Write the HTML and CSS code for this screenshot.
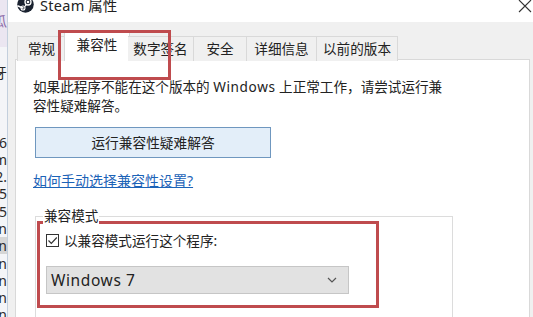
FILE: index.html
```html
<!DOCTYPE html>
<html lang="zh-CN">
<head>
<meta charset="utf-8">
<title>Steam 属性</title>
<link rel="stylesheet" href="styles.css">
</head>
<body>
<div class="bgwin">
  <div class="bgrow purple"></div>
  <div class="bgrow purple"><span class="pc">瓜</span></div>
  <div class="bgrow purple"></div>
  <div class="bgrow"></div>
  <div class="bgrow"><span>牙</span></div>
  <div class="bgrow"></div>
  <div class="bgrow"></div>
  <div class="bgrow"></div>
  <div class="bgrow"><span>26</span></div>
  <div class="bgrow"><span>am</span></div>
  <div class="bgrow"><span>32.</span></div>
  <div class="bgrow"><span>5</span></div>
  <div class="bgrow"><span>5</span></div>
  <div class="bgrow"><span>n</span></div>
  <div class="bgrow hl"><span>n</span></div>
  <div class="bgrow"><span>n</span></div>
  <div class="bgrow"><span>n</span></div>
  <div class="bgrow"><span>n</span></div>
  <div class="bgrow"><span>n</span></div>
</div>
<div class="dialog">
  <div class="titlebar">
    <svg class="steam" width="17" height="17" viewBox="0 0 34 34">
      <circle cx="17" cy="17" r="16.5" fill="#1a2230"/>
      <circle cx="22" cy="12" r="6" fill="none" stroke="#fff" stroke-width="2.6"/>
      <circle cx="22" cy="12" r="2.6" fill="#fff"/>
      <path d="M2 20 L12 24" stroke="#fff" stroke-width="3" stroke-linecap="round"/>
      <circle cx="12" cy="24" r="4" fill="none" stroke="#fff" stroke-width="2.2"/>
      <path d="M16 21 L19 16" stroke="#fff" stroke-width="2.4"/>
    </svg>
    <span class="title"><span class="lat">Steam</span> 属性</span>
    <svg class="close" width="14" height="14" viewBox="0 0 14 14">
      <path d="M1 1 L13 13 M13 1 L1 13" stroke="#333" stroke-width="1.1"/>
    </svg>
  </div>
  <div class="tabs">
    <div class="tab">常规</div>
    <div class="tab active">兼容性</div>
    <div class="tab">数字签名</div>
    <div class="tab">安全</div>
    <div class="tab">详细信息</div>
    <div class="tab">以前的版本</div>
  </div>
  <div class="panel">
    <p class="desc">如果此程序不能在这个版本的 <span class="lat">Windows</span> 上正常工作，请尝试运行兼<br>容性疑难解答。</p>
    <div class="btn">运行兼容性疑难解答</div>
    <a class="link" href="#">如何手动选择兼容性设置?</a>
    <div class="group">
      <span class="group-label">兼容模式</span>
      <div class="mark">
        <label class="check">
          <span class="box">
            <svg width="11" height="11" viewBox="0 0 11 11"><path d="M1.5 5.5 L4.3 8.3 L9.8 2.5" fill="none" stroke="#333" stroke-width="1.2"/></svg>
          </span>
          <span>以兼容模式运行这个程序:</span>
        </label>
        <div class="select">
          <span class="lat">Windows 7</span>
          <svg width="10" height="6" viewBox="0 0 10 6"><path d="M1 1 L5 5 L9 1" fill="none" stroke="#555" stroke-width="1.2"/></svg>
        </div>
      </div>
    </div>
  </div>
</div>
<div class="tabmark"></div>
</body>
</html>
```
FILE: styles.css
```css
html, body {
  margin: 0;
  padding: 0;
}
body {
  width: 533px;
  height: 317px;
  overflow: hidden;
  display: flex;
  position: relative;
  background: #f0f0f0;
  font-family: "Noto Sans", "Noto Sans CJK SC", sans-serif;
  color: #222;
}
.lat {
  letter-spacing: 0.6px;
}
.bgwin {
  width: 7px;
  flex: none;
  border-right: 1px solid #c3cfdd;
  background: #f4f5f8;
  display: flex;
  flex-direction: column;
  margin-top: -5px;
  overflow: hidden;
}
.bgrow {
  height: 17.3px;
  flex: none;
  display: flex;
  justify-content: flex-end;
  align-items: center;
  white-space: nowrap;
  font-size: 14px;
  line-height: 17px;
  color: #2a2a2a;
}
.bgrow.purple {
  background: #ebe6f1;
}
.bgrow .pc {
  color: #8a6aa8;
}
.bgrow.hl {
  background: #d6d6d6;
}
.dialog {
  flex: 1;
  display: flex;
  flex-direction: column;
  background: #f0f0f0;
  min-width: 0;
}
.titlebar {
  height: 22px;
  flex: none;
  background: #fff;
  display: flex;
  align-items: flex-start;
  padding-left: 9px;
  padding-right: 1px;
}
.steam {
  margin-top: -4px;
  flex: none;
}
.title {
  margin-left: 6px;
  margin-top: -4px;
  font-size: 14.5px;
  line-height: 18px;
  color: #222;
}
.title .lat {
  letter-spacing: 0.3px;
}
.close {
  margin-left: auto;
  margin-top: -1px;
}
.tabs {
  display: grid;
  grid-template-columns: 49px 62px 66px 53px 70px 81px;
  align-items: end;
  height: 29px;
  margin-top: 9px;
  padding-left: 9px;
  position: relative;
  z-index: 1;
  margin-bottom: -1px;
}
.tab {
  height: 25px;
  box-sizing: border-box;
  border: 1px solid #d9d9d9;
  border-left-width: 0;
  border-bottom: none;
  background: #f0f0f0;
  font-size: 13.6px;
  line-height: 24px;
  text-align: center;
  white-space: nowrap;
}
.tab:first-child {
  border-left-width: 1px;
}
.tab.active {
  height: 30px;
  background: #fff;
  border-left-width: 1px;
  margin: 0 -2px;
  line-height: 26px;
}
.panel {
  flex: 1;
  margin: 0 3px 0 7px;
  background: #fff;
  border: 1px solid #d9d9d9;
  padding: 17px 0 0 17px;
  display: flex;
  flex-direction: column;
  align-items: flex-start;
  font-size: 13.6px;
  line-height: 19px;
}
.desc {
  margin: 0;
  color: #222;
  font-size: 13.6px;
  white-space: nowrap;
}
.btn {
  margin: 12px 0 0 2px;
  width: 236px;
  height: 31px;
  box-sizing: border-box;
  background: #e3eef9;
  border: 1px solid #6f97bf;
  display: flex;
  align-items: center;
  justify-content: center;
  font-size: 13.7px;
}
.link {
  margin-top: 13px;
  color: #1c63b7;
  text-decoration: underline;
  font-size: 14px;
}
.group {
  margin: 26px 0 0 2px;
  width: 418px;
  height: 120px;
  flex: none;
  box-sizing: border-box;
  border: 1px solid #dcdcdc;
  position: relative;
  padding: 4px 0 0 1px;
}
.group-label {
  position: absolute;
  top: -11px;
  left: 7px;
  background: #fff;
  padding: 0 1px;
}
.mark {
  width: 342px;
  box-sizing: border-box;
  border: 3px solid #bf4b4e;
  padding: 7px 0 11px 6px;
}
.check {
  display: flex;
  align-items: center;
  gap: 5px;
  height: 19px;
}
.box {
  width: 13px;
  height: 13px;
  box-sizing: border-box;
  border: 1px solid #333;
  display: flex;
  align-items: center;
  justify-content: center;
  background: #fff;
}
.select {
  margin-top: 16px;
  width: 303px;
  height: 28px;
  box-sizing: border-box;
  background: #e2e2e2;
  border: 1px solid #c6c6c6;
  display: flex;
  align-items: center;
  justify-content: space-between;
  padding: 0 11px 0 4px;
  font-size: 15.5px;
  color: #222;
}
.tabmark {
  position: absolute;
  left: 58px;
  top: 30px;
  width: 113px;
  height: 50px;
  box-sizing: border-box;
  border: 3px solid #bf4b4e;
  z-index: 5;
}
```
